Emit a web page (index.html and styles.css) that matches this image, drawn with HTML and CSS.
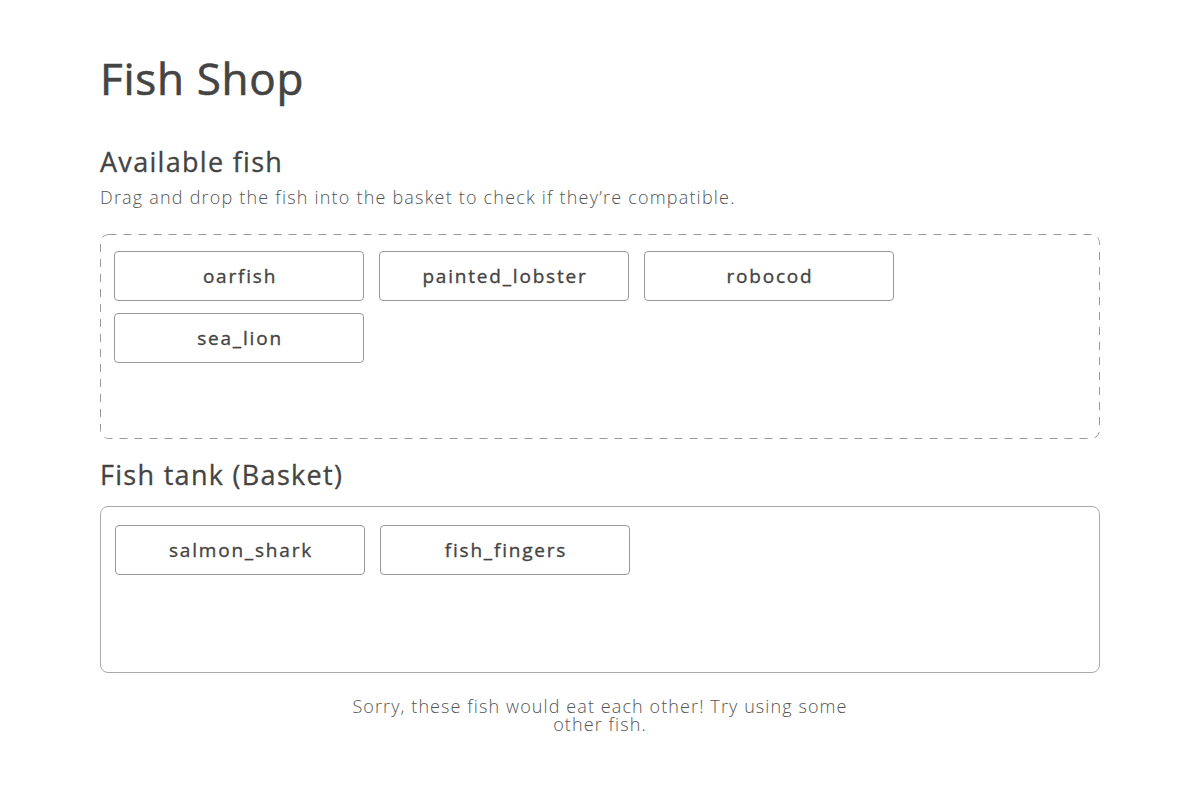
FILE: index.html
```html
<!DOCTYPE html>
<html lang="en">
<head>
<meta charset="utf-8">
<title>Fish Shop</title>
<link rel="stylesheet" href="styles.css">
</head>
<body>
<main class="page">
  <h1 class="title">Fish Shop</h1>
  <h2 class="heading">Available fish</h2>
  <p class="hint">Drag and drop the fish into the basket to check if they’re compatible.</p>
  <div class="zone zone-available">
    <div class="fish">oarfish</div>
    <div class="fish">painted_lobster</div>
    <div class="fish">robocod</div>
    <div class="fish">sea_lion</div>
  </div>
  <h2 class="heading heading-tank">Fish tank (Basket)</h2>
  <div class="zone zone-basket">
    <div class="fish">salmon_shark</div>
    <div class="fish">fish_fingers</div>
  </div>
  <p class="message">Sorry, these fish would eat each other! Try using some other fish.</p>
</main>
</body>
</html>
```

FILE: styles.css
```css
* { box-sizing: border-box; }
html, body { margin: 0; padding: 0; background: #fff; }
body {
  font-family: "Open Sans", "Liberation Sans", sans-serif;
  color: #444;
}
.page {
  width: 1000px;
  margin: 0 auto;
  padding-top: 52px;
  display: flex;
  flex-direction: column;
}
.title {
  margin: 0;
  font-size: 44px;
  line-height: 52px;
  font-weight: 400;
  letter-spacing: 0.7px;
  color: #444;
  -webkit-text-stroke: 0.6px #444;
}
.heading {
  margin: 42px 0 0;
  font-size: 27px;
  line-height: 32px;
  font-weight: 400;
  letter-spacing: 1.3px;
  color: #444;
  -webkit-text-stroke: 0.3px #444;
}
.hint {
  margin: 7px 0 0;
  font-size: 18px;
  line-height: 24px;
  font-weight: 300;
  letter-spacing: 1.2px;
  color: #555;
}
.zone {
  display: flex;
  flex-wrap: wrap;
  align-content: flex-start;
  gap: 12px 15px;
  border-radius: 8px;
}
.zone-available {
  margin-top: 25px;
  height: 205px;
  padding: 17px 14px;
  background-image: url("data:image/svg+xml,%3Csvg xmlns='http://www.w3.org/2000/svg' width='100%25' height='100%25'%3E%3Crect x='0.5' y='0.5' width='999' height='204' rx='8' ry='8' fill='none' stroke='%23999' stroke-width='1' stroke-dasharray='8 7'/%3E%3C/svg%3E");
}
.heading-tank { margin-top: 20px; }
.zone-basket {
  margin-top: 15px;
  height: 167px;
  padding: 18px 14px;
  border: 1px solid #aaa;
}
.fish {
  width: 250px;
  height: 50px;
  border: 1px solid #999;
  border-radius: 4px;
  display: flex;
  align-items: center;
  justify-content: center;
  padding-left: 2px;
  padding-bottom: 1px;
  font-size: 19px;
  font-weight: 400;
  letter-spacing: 1.8px;
  color: #444;
  -webkit-text-stroke: 0.35px #444;
}
.message {
  margin: 24px auto 0;
  width: 500px;
  text-align: center;
  font-size: 18px;
  line-height: 18px;
  font-weight: 300;
  letter-spacing: 1.1px;
  color: #555;
}
```
